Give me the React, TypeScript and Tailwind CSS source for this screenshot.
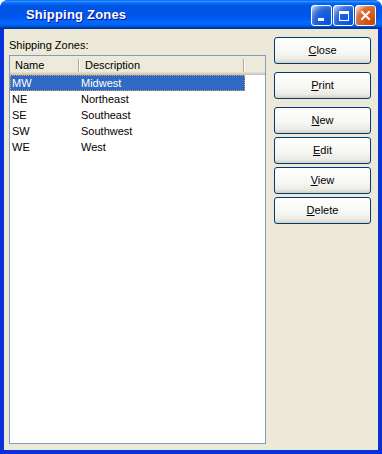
const zones = [
  { code: 'MW', name: 'Midwest' },
  { code: 'NE', name: 'Northeast' },
  { code: 'SE', name: 'Southeast' },
  { code: 'SW', name: 'Southwest' },
  { code: 'WE', name: 'West' },
];

function CaptionButton({ kind }: { kind: 'min' | 'max' | 'close' }) {
  const bg =
    kind === 'close'
      ? 'bg-[radial-gradient(circle_at_90%_90%,#cc4600_0%,#dc6527_55%,#cd7546_68%,#ffccb2_90%,#fff_100%)]'
      : 'bg-[radial-gradient(circle_at_90%_90%,#0054e9_0%,#2263d5_55%,#4479e4_70%,#a3bbec_90%,#fff_100%)]';
  return (
    <div className={`w-[21px] h-[21px] rounded-[3px] border border-white flex items-center justify-center ${bg}`}>
      {kind === 'min' && (
        <svg width="13" height="13" viewBox="0 0 13 13">
          <rect x="3" y="9" width="6" height="3" fill="#fff" />
        </svg>
      )}
      {kind === 'max' && (
        <svg width="13" height="13" viewBox="0 0 13 13">
          <rect x="2.5" y="2.5" width="9" height="9" fill="none" stroke="#fff" strokeWidth="1" />
          <rect x="2" y="2" width="10" height="3" fill="#fff" />
        </svg>
      )}
      {kind === 'close' && (
        <svg width="13" height="13" viewBox="0 0 13 13">
          <path d="M3 3 L10 10 M10 3 L3 10" stroke="#fff" strokeWidth="2" strokeLinecap="square" />
        </svg>
      )}
    </div>
  );
}

function XpButton({ label, mt }: { label: string; mt: string }) {
  return (
    <div
      className={`${mt} w-[97px] h-[27px] rounded-[3px] border border-[#003c74] bg-[linear-gradient(to_bottom,#ffffff_0%,#f6f6f2_60%,#ecebe6_85%,#d6d0c5_100%)] flex items-center justify-center text-[11px] text-black`}
    >
      <span>
        <span className="underline">{label[0]}</span>
        {label.slice(1)}
      </span>
    </div>
  );
}

export default function App() {
  return (
    <div
      className="w-[382px] h-[454px] flex flex-col rounded-t-[8px] bg-[#0831d9] overflow-hidden"
      style={{ fontFamily: '"Liberation Sans", Arial, sans-serif' }}
    >
      <div className="h-[29px] shrink-0 flex items-center pl-[26px] pr-[6px] rounded-t-[8px] bg-[linear-gradient(to_bottom,#0058ee_0%,#3593ff_4%,#288eff_6%,#127dff_8%,#036ffc_10%,#0262ee_14%,#0057e5_20%,#0054e3_24%,#0055eb_56%,#005bf5_66%,#026afe_76%,#0062ef_86%,#0052d6_92%,#0040ab_94%,#003092_100%)]">
        <span className="text-white font-bold text-[13px] tracking-[0.2px] [text-shadow:1px_1px_#0f1089]">
          Shipping Zones
        </span>
        <div className="ml-auto flex gap-[1px] pt-[1px]">
          <CaptionButton kind="min" />
          <CaptionButton kind="max" />
          <CaptionButton kind="close" />
        </div>
      </div>
      <div className="flex-1 flex mx-[4px] mb-[4px] bg-[#ece9d8]">
        <div className="flex flex-col pl-[5px] w-[262px]">
          <div className="mt-[10px] text-[11px] leading-[13px] text-black">Shipping Zones:</div>
          <div className="mt-[3px] mb-[6px] flex-1 border border-[#7f9db9] bg-white flex flex-col">
            <div className="h-[19px] flex bg-[#ebeadb] shadow-[inset_0_-1px_#cbc7b8,inset_0_-2px_#d6d2c2,inset_0_-3px_#e2decd] text-[11px] text-black">
              <div className="w-[70px] flex items-center pl-[5px] relative">
                Name
                <span className="absolute right-[0px] top-[3px] h-[13px] w-[2px] border-l border-[#aca899] bg-white" />
              </div>
              <div className="w-[165px] flex items-center pl-[5px] relative">
                Description
                <span className="absolute right-[0px] top-[3px] h-[13px] w-[2px] border-l border-[#aca899] bg-white" />
              </div>
            </div>
            <div className="flex flex-col text-[11px]">
              {zones.map((z, i) => (
                <div
                  key={z.code}
                  className={`w-[235px] h-[16px] flex items-center pt-[1px] border ${
                    i === 0 ? 'bg-[#316ac5] text-white border-dotted border-[#d8a24a]' : 'border-transparent text-black'
                  }`}
                >
                  <span className="w-[69px] pl-[1px]">{z.code}</span>
                  <span className="pl-[1px]">{z.name}</span>
                </div>
              ))}
            </div>
          </div>
        </div>
        <div className="flex flex-col pl-[8px]">
          <XpButton label="Close" mt="mt-[8px]" />
          <XpButton label="Print" mt="mt-[8px]" />
          <XpButton label="New" mt="mt-[8px]" />
          <XpButton label="Edit" mt="mt-[3px]" />
          <XpButton label="View" mt="mt-[3px]" />
          <XpButton label="Delete" mt="mt-[3px]" />
        </div>
      </div>
    </div>
  );
}
